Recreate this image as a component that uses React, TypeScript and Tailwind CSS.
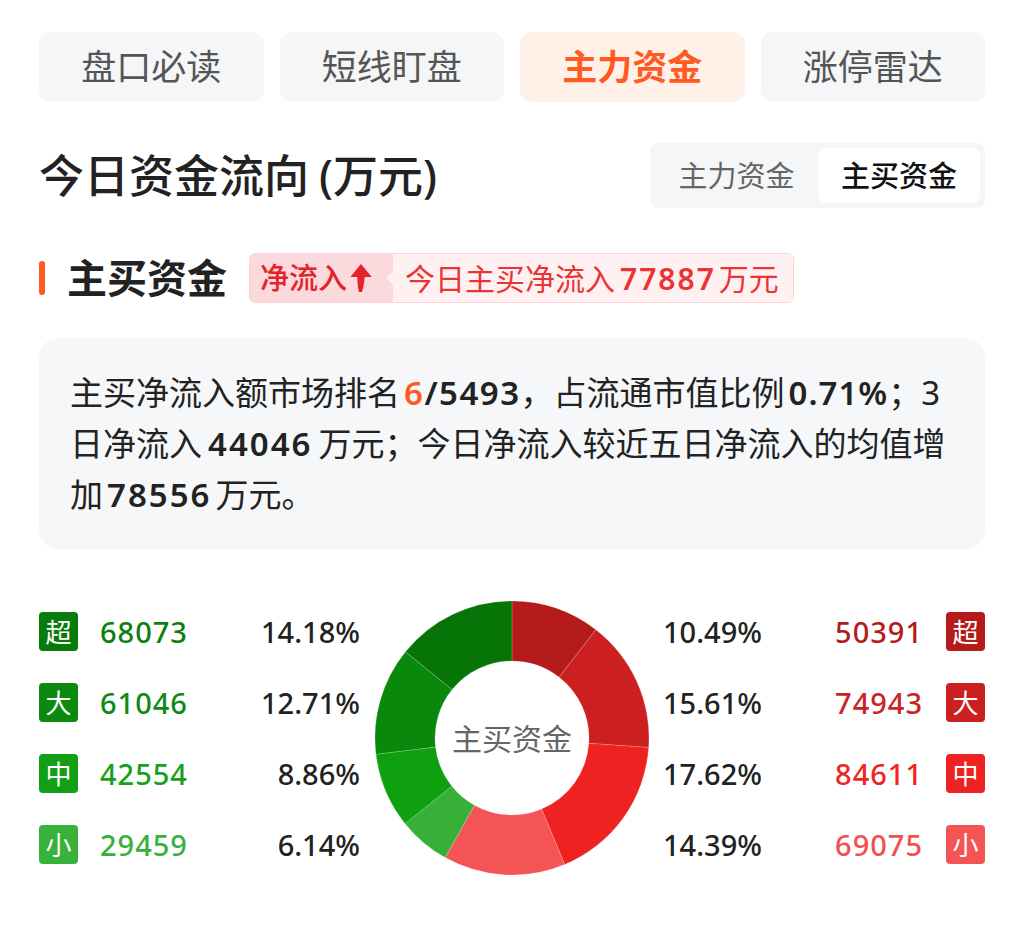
import React from 'react';

const FONT = "font-['Noto_Sans','Noto_Sans_CJK_SC',sans-serif]";

const tabs = ['盘口必读', '短线盯盘', '主力资金', '涨停雷达'];

type Level = { label: string; value: string; pct: number; badge: string; text: string };

const outflow: Level[] = [
  { label: '超', value: '68073', pct: 14.18, badge: 'bg-[#097a0c]', text: 'text-[#0b7f10]' },
  { label: '大', value: '61046', pct: 12.71, badge: 'bg-[#0b8a0f]', text: 'text-[#0e8a12]' },
  { label: '中', value: '42554', pct: 8.86, badge: 'bg-[#11a014]', text: 'text-[#16a019]' },
  { label: '小', value: '29459', pct: 6.14, badge: 'bg-[#38b23a]', text: 'text-[#38b23a]' },
];

const inflow: Level[] = [
  { label: '超', value: '50391', pct: 10.49, badge: 'bg-[#b51b1b]', text: 'text-[#b51b1b]' },
  { label: '大', value: '74943', pct: 15.61, badge: 'bg-[#cc1f1f]', text: 'text-[#cc2222]' },
  { label: '中', value: '84611', pct: 17.62, badge: 'bg-[#ef2222]', text: 'text-[#ef2424]' },
  { label: '小', value: '69075', pct: 14.39, badge: 'bg-[#f45454]', text: 'text-[#f25050]' },
];

// clockwise from 12 o'clock: reds super -> small, then greens small -> super
const slices = [
  { pct: 10.49, color: '#b51b1b' },
  { pct: 15.61, color: '#cc1f1f' },
  { pct: 17.62, color: '#ef2222' },
  { pct: 14.39, color: '#f45454' },
  { pct: 6.14, color: '#38b038' },
  { pct: 8.86, color: '#0ea00f' },
  { pct: 12.71, color: '#0a880b' },
  { pct: 14.18, color: '#077407' },
];

const pt = (cx: number, cy: number, r: number, a: number) => {
  const rad = ((a - 90) * Math.PI) / 180;
  return [cx + r * Math.cos(rad), cy + r * Math.sin(rad)];
};

const arc = (start: number, end: number, R: number, r: number, c: number) => {
  const [x1, y1] = pt(c, c, R, start);
  const [x2, y2] = pt(c, c, R, end);
  const [x3, y3] = pt(c, c, r, end);
  const [x4, y4] = pt(c, c, r, start);
  const big = end - start > 180 ? 1 : 0;
  return `M${x1} ${y1} A${R} ${R} 0 ${big} 1 ${x2} ${y2} L${x3} ${y3} A${r} ${r} 0 ${big} 0 ${x4} ${y4} Z`;
};

const Donut: React.FC = () => {
  const total = slices.reduce((s, x) => s + x.pct, 0);
  let acc = 0;
  return (
    <div className="relative w-[274px] h-[274px] shrink-0">
      <svg width="274" height="274" viewBox="0 0 274 274">
        {slices.map((s, i) => {
          const start = (acc / total) * 360;
          acc += s.pct;
          const end = (acc / total) * 360;
          return (
            <path key={i} d={arc(start, end, 137, 77, 137)} fill={s.color} stroke="#ffffff" strokeOpacity="0.35" strokeWidth="0.5" />
          );
        })}
      </svg>
      <div className="absolute inset-0 flex items-center justify-center text-[30px] text-[#666]">主买资金</div>
    </div>
  );
};

const Badge: React.FC<{ label: string; cls: string }> = ({ label, cls }) => (
  <div className={`w-[39px] h-[39px] rounded-[4px] flex items-center justify-center text-white text-[26px] leading-none ${cls}`}>
    {label}
  </div>
);

export default function App() {
  return (
    <div className={`${FONT} bg-white min-h-[934px] px-[39px] pt-[32px] text-[#222]`}>
      <div className="grid grid-cols-4 gap-4">
        {tabs.map((t, i) => (
          <div
            key={t}
            className={`h-[70px] rounded-xl flex items-center justify-center text-[35px] ${
              i === 2 ? 'bg-[#fff0e8] text-[#ff5a1f] font-bold' : 'bg-[#f5f6f8] text-[#555]'
            }`}
          >
            {t}
          </div>
        ))}
      </div>

      <div className="mt-[41px] h-[65px] flex items-center justify-between">
        <h1 className="text-[45px] font-medium leading-none">
          今日资金流向<span className="ml-[10px]">(万元)</span>
        </h1>
        <div className="w-[335px] h-[65px] bg-[#f5f6f8] rounded-lg flex items-center p-[5px]">
          <div className="flex-1 text-center text-[29px] text-[#666]">主力资金</div>
          <div className="w-[162px] h-full bg-white rounded-lg flex items-center justify-center text-[29px] font-medium text-[#111]">
            主买资金
          </div>
        </div>
      </div>

      <div className="mt-[45px] h-[50px] flex items-center">
        <div className="w-[6px] h-[34px] rounded-full bg-[#ff5a1f]" />
        <h2 className="ml-[22px] text-[40px] font-bold leading-none">主买资金</h2>
        <div className="ml-[22px] h-[50px] flex items-stretch rounded-md border border-[#fbd3d6] overflow-hidden">
          <div className="bg-[#fcd9dc] flex items-center pl-[10px] pr-[20px] text-[29px] font-medium text-[#e4232b]">
            净流入
            <svg width="24" height="30" viewBox="0 0 22 28" className="ml-[2px]">
              <path d="M11 1 L21 13 L14.5 13 Q14 20 12 27 L9 27 Q7.5 20 7.5 13 L1 13 Z" fill="#e4232b" />
            </svg>
          </div>
          <div className="relative bg-[#fff1f2] flex items-center pl-[12px] pr-[14px] text-[30px] text-[#ea3434]">
            <span className="absolute left-[-7px] top-1/2 -translate-y-1/2 w-0 h-0 border-y-[7px] border-y-transparent border-r-[7px] border-r-[#fff1f2]" />
            今日主买净流入<span className="font-semibold tracking-[2px] ml-[5px] mr-[3px]">77887</span>万元
          </div>
        </div>
      </div>

      <div className="mt-[35px] bg-[#f6f7f9] rounded-[20px] px-[31px] py-[29px] text-[33px] leading-[51px] text-[#222] whitespace-nowrap">
        <div>
          主买净流入额市场排名
          <span className="font-semibold tracking-[1.5px] ml-[4px]">
            <span className="text-[#ff5a1f]">6</span>/5493
          </span>
          ，占流通市值比例<span className="font-semibold tracking-[1px] ml-[4px]">0.71%</span>；3
        </div>
        <div>
          日净流入<span className="font-semibold tracking-[2px] mx-[6px]">44046</span>万元；今日净流入较近五日净流入的均值增
        </div>
        <div>
          加<span className="font-semibold tracking-[2px] mx-[4px]">78556</span>万元。
        </div>
      </div>

      <div className="mt-[52px] flex items-center">
        <div className="w-[321px] flex flex-col gap-[32px]">
          {outflow.map(l => (
            <div key={l.label} className="h-[39px] flex items-center">
              <Badge label={l.label} cls={l.badge} />
              <span className={`ml-[22px] text-[29px] font-medium tracking-[1px] ${l.text}`}>{l.value}</span>
              <span className="ml-auto text-[29px] font-medium text-[#222]">{l.pct.toFixed(2)}%</span>
            </div>
          ))}
        </div>
        <div className="ml-[15px]">
          <Donut />
        </div>
        <div className="ml-[14px] flex-1 flex flex-col gap-[32px]">
          {inflow.map(l => (
            <div key={l.label} className="h-[39px] flex items-center">
              <span className="text-[29px] font-medium text-[#222]">{l.pct.toFixed(2)}%</span>
              <span className={`ml-auto text-[29px] font-medium tracking-[1px] ${l.text}`}>{l.value}</span>
              <div className="ml-[23px]">
                <Badge label={l.label} cls={l.badge} />
              </div>
            </div>
          ))}
        </div>
      </div>
    </div>
  );
}
